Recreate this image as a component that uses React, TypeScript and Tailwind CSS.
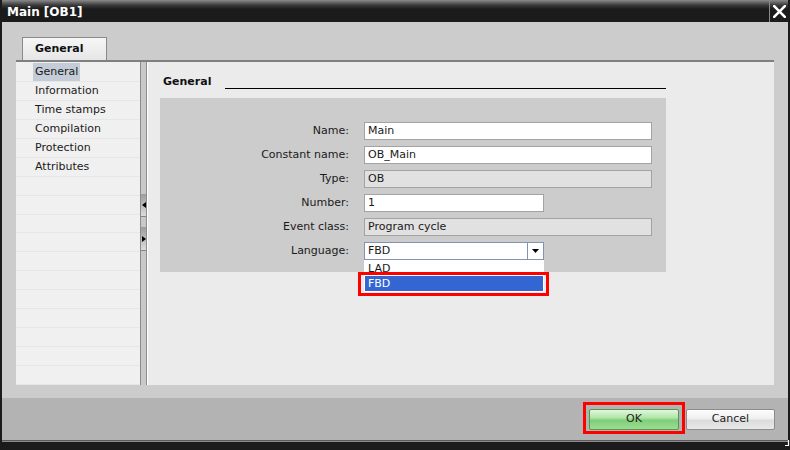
import React from 'react';

function Field({ label, value, width, gray }: { label: string; value: string; width: string; gray?: boolean }) {
  return (
    <div className="flex items-center h-[18px] mb-[6px]">
      <div className="w-[189px] text-right leading-[18px] text-[#1a1a1a]">{label}</div>
      <div
        className={`ml-[15px] h-[18px] border border-[#a3a3a3] pl-[3px] flex items-center leading-[16px] ${width} ${gray ? 'bg-[#e1e1e1]' : 'bg-white'}`}
      >
        {value}
      </div>
    </div>
  );
}

export default function App() {
  const nav = ['General', 'Information', 'Time stamps', 'Compilation', 'Protection', 'Attributes', '', '', '', '', '', '', '', '', '', '', ''];
  return (
    <div className="relative w-[790px] h-[450px] flex flex-col bg-[#1b1b1b] font-['DejaVu_Sans',sans-serif] text-[11px] text-[#1a1a1a] overflow-hidden">
      <div className="flex flex-col mx-[2px]">
        {/* Title bar */}
        <div className="h-[22px] flex bg-[linear-gradient(to_bottom,#8a8a8a_0px,#3c3c3c_5px,#1b1b1b_9px)]">
          <div className="flex-1 flex items-center pl-[5px] pt-[1px] text-white font-bold text-[12px]">Main [OB1]</div>
          <div className="w-px bg-[#8a8a8a]" />
          <div className="w-[18px] flex items-center justify-center">
            <svg width="13" height="13" viewBox="0 0 13 13">
              <path d="M1.2 1.2 L11.8 11.8 M11.8 1.2 L1.2 11.8" stroke="white" strokeWidth="2.6" strokeLinecap="square" />
            </svg>
          </div>
        </div>

        {/* Body */}
        <div className="h-[376px] bg-[#cccccc] flex flex-col pt-[15px]">
          <div className="flex pl-[20px]">
            <div className="h-[23px] w-[85px] border border-b-0 border-[#8a8a8a] bg-[linear-gradient(to_bottom,#f6f6f6,#e6e6e6)] flex items-center pl-[12px] pt-px font-bold text-[11px] text-[#111]">
              General
            </div>
          </div>
          <div className="mx-[14px] h-[325px] border-t-2 border-[#808080] flex">
            {/* Left nav */}
            <div className="w-[124px] bg-[#f0f0f0] pt-px flex flex-col">
              {nav.map((n, i) => (
                <div key={i} className="h-[19px] border-b border-[#e6e6e6] pl-[17px] flex items-stretch">
                  <span className={`px-[2px] flex items-center pt-px ${i === 0 ? 'bg-[#c3ccd7]' : ''}`}>{n}</span>
                </div>
              ))}
            </div>
            {/* Splitter */}
            <div className="w-[8px] flex">
              <div className="w-px bg-[#8c8c8c]" />
              <div className="w-[5px] bg-[#c8c8c8] flex flex-col pt-[132px]">
                <div className="h-[23px] border-b border-[#858585] bg-[linear-gradient(to_bottom,#9c9c9c,#dcdcdc)] flex items-center pl-[1px]">
                  <svg width="4" height="6" viewBox="0 0 4 6">
                    <path d="M0 3 L4 0 L4 6 Z" fill="#000" />
                  </svg>
                </div>
                <div className="h-[24px] mt-[10px] border-b border-[#858585] bg-[linear-gradient(to_bottom,#9c9c9c,#dcdcdc)] flex items-center pl-[1px]">
                  <svg width="4" height="6" viewBox="0 0 4 6">
                    <path d="M0 0 L4 3 L0 6 Z" fill="#000" />
                  </svg>
                </div>
              </div>
              <div className="w-px bg-[#8c8c8c]" />
              <div className="w-px bg-white" />
            </div>
            {/* Right content */}
            <div className="flex-1 bg-[#ebebeb] flex flex-col pl-[12px]">
              <div className="h-[27px] w-[506px] flex items-end pl-[3px]">
                <span className="font-bold leading-[14px] text-[#111]">General</span>
                <div className="flex-1 ml-[14px] h-px bg-black" />
              </div>
              <div className="mt-[9px] w-[506px] h-[174px] bg-[#cccccc] pt-[24px]">
                <Field label="Name:" value="Main" width="w-[288px]" />
                <Field label="Constant name:" value="OB_Main" width="w-[288px]" />
                <Field label="Type:" value="OB" width="w-[288px]" gray />
                <Field label="Number:" value="1" width="w-[180px]" />
                <Field label="Event class:" value="Program cycle" width="w-[288px]" gray />
                <div className="flex items-center h-[18px]">
                  <div className="w-[189px] text-right leading-[18px]">Language:</div>
                  <div className="relative ml-[15px] w-[180px] h-[18px] border border-[#8392b8] bg-white flex">
                    <div className="flex-1 pl-[3px] flex items-center leading-[16px]">FBD</div>
                    <div className="w-[16px] border-l border-[#8392b8] flex items-center justify-center">
                      <svg width="7" height="4" viewBox="0 0 7 4">
                        <path d="M0 0 L7 0 L3.5 4 Z" fill="#000" />
                      </svg>
                    </div>
                    {/* Dropdown list */}
                    <div className="absolute left-[-1px] top-[17px] w-[180px] bg-white flex flex-col">
                      <div className="h-[15px] overflow-hidden flex items-end pl-[4px]">
                        <span className="leading-[13px]">LAD</span>
                      </div>
                      <div className="h-[17px] p-px">
                        <div className="h-full bg-[#3366d2] text-white pl-[3px] flex items-center leading-[15px]">FBD</div>
                      </div>
                    </div>
                    <div className="absolute left-[-7px] top-[29px] w-[191px] h-[24px] border-[3px] border-[#ff0000]" />
                  </div>
                </div>
              </div>
            </div>
          </div>
        </div>

        {/* Bottom bar */}
        <div className="h-[42px] bg-[#b3b3b3] flex justify-end items-start pt-[11px] pr-[13px] gap-[7px]">
          <div className="relative w-[90px] h-[21px]">
            <div className="absolute -left-[6px] -top-[7px] -right-[6px] -bottom-[4px] border-[3px] border-[#ff0000]" />
            <div className="relative w-full h-full border border-[#4e9a4a] rounded-[2px] bg-[linear-gradient(to_bottom,#e2f6dd_0%,#b2e6aa_40%,#7fcf77_55%,#9ddc95_100%)] flex items-center justify-center text-[#222]">
              OK
            </div>
          </div>
          <div className="w-[89px] h-[21px] border border-[#8c8c8c] rounded-[2px] bg-[linear-gradient(to_bottom,#fdfdfd_0%,#efefef_45%,#dcdcdc_55%,#e8e8e8_100%)] flex items-center justify-center text-[#222]">
            Cancel
          </div>
        </div>
        <div className="h-px bg-[#5a5a5a]" />
        <div className="h-px bg-[#8c8c8c]" />
      </div>
      <svg className="absolute right-0 bottom-[3px]" width="5" height="7" viewBox="0 0 5 7">
        <path d="M3.5 0 L3.5 5.5 L0 5.5" stroke="white" strokeWidth="1.2" fill="none" />
      </svg>
    </div>
  );
}
